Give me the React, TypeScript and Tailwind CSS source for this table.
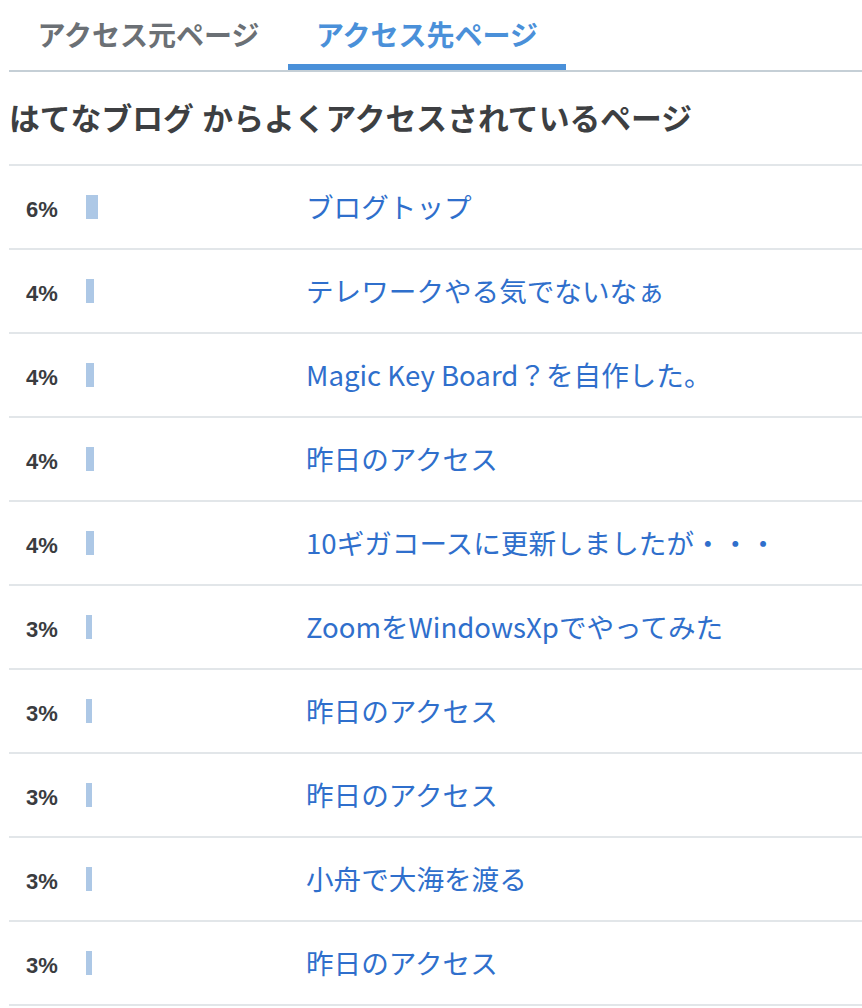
import React from "react";

const rows: { pct: number; title: string }[] = [
  { pct: 6, title: "ブログトップ" },
  { pct: 4, title: "テレワークやる気でないなぁ" },
  { pct: 4, title: "Magic Key Board？を自作した。" },
  { pct: 4, title: "昨日のアクセス" },
  { pct: 4, title: "10ギガコースに更新しましたが・・・" },
  { pct: 3, title: "ZoomをWindowsXpでやってみた" },
  { pct: 3, title: "昨日のアクセス" },
  { pct: 3, title: "昨日のアクセス" },
  { pct: 3, title: "小舟で大海を渡る" },
  { pct: 3, title: "昨日のアクセス" },
];

const font = { fontFamily: '"Liberation Sans", "Noto Sans CJK JP", sans-serif' };

export default function App() {
  return (
    <div className="min-h-screen bg-white pl-[9px]" style={font}>
      {/* tabs */}
      <div className="flex border-b-2 border-[#c5cfd6]">
        <div className="w-[279px] h-[70px] flex items-center justify-center text-[28px] font-bold text-[#6b7075] pt-[4px]">
          アクセス元ページ
        </div>
        <div className="w-[278px] h-[70px] flex items-center justify-center text-[28px] font-bold text-[#4a90d9] border-b-[6px] border-[#4a90d9] pt-[10px]">
          アクセス先ページ
        </div>
      </div>

      <div className="h-[94px] flex items-center border-b-2 border-[#e2e6e9] pt-[4px]">
        <h2 className="text-[30.8px] font-bold text-[#3d3f42] leading-none">
          はてなブログ からよくアクセスされているページ
        </h2>
      </div>

      <ul>
        {rows.map((r, i) => (
          <li key={i} className="h-[84px] flex items-center border-b-2 border-[#e2e6e9]">
            <span className="w-[77px] pl-[17px] pt-[4px] text-[22px] font-bold text-[#3a3c3f]">{r.pct}%</span>
            <div className="w-[220px] flex items-center">
              <div className="h-[24px] bg-[#adc8e6]" style={{ width: r.pct * 2 }} />
            </div>
            <a className="text-[27.6px] text-[#2f6fcc] font-['Noto_Sans_CJK_JP',sans-serif] leading-normal">
              {r.title}
            </a>
          </li>
        ))}
      </ul>
    </div>
  );
}
